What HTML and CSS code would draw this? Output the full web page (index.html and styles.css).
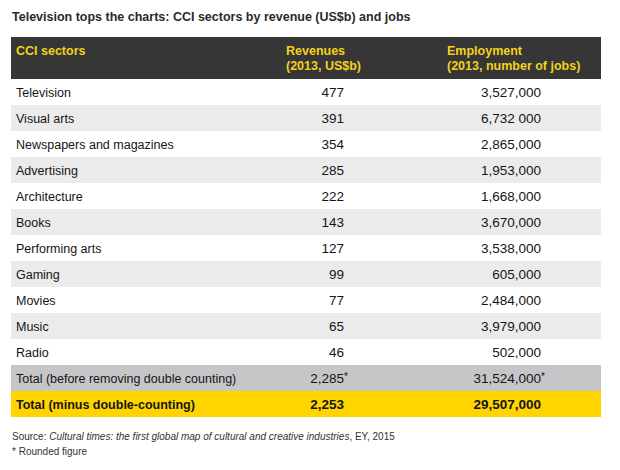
FILE: index.html
```html
<!DOCTYPE html>
<html>
<head>
<meta charset="utf-8">
<link rel="stylesheet" href="styles.css">
</head>
<body>
<div class="page">
  <h1 class="title">Television tops the charts: CCI sectors by revenue (US$b) and jobs</h1>
  <table class="cci">
    <colgroup>
      <col class="c1"><col class="c2"><col class="c3">
    </colgroup>
    <thead>
      <tr>
        <th class="h-sector">CCI sectors</th>
        <th>Revenues<br>(2013, US$b)</th>
        <th>Employment<br>(2013, number of jobs)</th>
      </tr>
    </thead>
    <tbody>
      <tr><td>Television</td><td class="rev">477</td><td class="emp">3,527,000</td></tr>
      <tr class="alt"><td>Visual arts</td><td class="rev">391</td><td class="emp">6,732 000</td></tr>
      <tr><td>Newspapers and magazines</td><td class="rev">354</td><td class="emp">2,865,000</td></tr>
      <tr class="alt"><td>Advertising</td><td class="rev">285</td><td class="emp">1,953,000</td></tr>
      <tr><td>Architecture</td><td class="rev">222</td><td class="emp">1,668,000</td></tr>
      <tr class="alt"><td>Books</td><td class="rev">143</td><td class="emp">3,670,000</td></tr>
      <tr><td>Performing arts</td><td class="rev">127</td><td class="emp">3,538,000</td></tr>
      <tr class="alt"><td>Gaming</td><td class="rev">99</td><td class="emp">605,000</td></tr>
      <tr><td>Movies</td><td class="rev">77</td><td class="emp">2,484,000</td></tr>
      <tr class="alt"><td>Music</td><td class="rev">65</td><td class="emp">3,979,000</td></tr>
      <tr><td>Radio</td><td class="rev">46</td><td class="emp">502,000</td></tr>
      <tr class="total-gray"><td>Total (before removing double counting)</td><td class="rev">2,285<span class="star">*</span></td><td class="emp">31,524,000<span class="star">*</span></td></tr>
      <tr class="total-yellow"><td>Total (minus double-counting)</td><td class="rev">2,253</td><td class="emp">29,507,000</td></tr>
    </tbody>
  </table>
  <p class="source">Source: <em>Cultural times: the first global map of cultural and creative industries</em>, EY, 2015</p>
  <p class="note">* Rounded figure</p>
</div>
</body>
</html>
```
FILE: styles.css
```css
html, body {
  margin: 0;
  padding: 0;
  background: #ffffff;
}
body {
  font-family: "Liberation Sans", Arial, sans-serif;
  color: #151515;
}
.page {
  padding: 9px 0 0 11px;
  width: 590px;
}
.title {
  margin: 0 0 0 1px;
  font-size: 12.5px;
  font-weight: bold;
  color: #2a2a2a;
  line-height: 16px;
  height: 28px;
}
.cci {
  border-collapse: collapse;
  width: 590px;
  table-layout: fixed;
}
.c1 { width: 270px; }
.c2 { width: 161px; }
.c3 { width: 159px; }
.cci thead tr {
  background: #363636;
}
.cci th {
  text-align: left;
  vertical-align: top;
  color: #f2d21a;
  font-size: 12.5px;
  font-weight: bold;
  line-height: 15px;
  padding: 7px 0 5px 5px;
  height: 30px;
}
.cci td {
  height: 26px;
  padding: 2px 0 0 5px;
  font-size: 12.5px;
  line-height: 24px;
  white-space: nowrap;
  box-sizing: border-box;
}
.cci td.rev {
  text-align: right;
  padding-right: 98px;
  font-size: 13.5px;
}
.cci td.emp {
  text-align: right;
  padding-right: 60px;
  font-size: 13.5px;
}
.star {
  position: absolute;
  font-size: 10px;
  margin-top: -2px;
}
.alt { background: #ebebeb; }
.total-gray { background: #c6c6c8; }
.total-yellow { background: #ffd400; font-weight: bold; }
.source {
  margin: 13px 0 0 1px;
  font-size: 10px;
  color: #333;
  line-height: 14px;
}
.note {
  margin: 1px 0 0 1px;
  font-size: 10px;
  color: #333;
  line-height: 14px;
}
```
